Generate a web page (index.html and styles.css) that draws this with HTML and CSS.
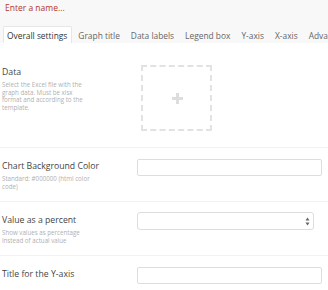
FILE: index.html
```html
<!DOCTYPE html>
<html>
    <head>
        <meta charset="utf-8">
        <title>Graph settings</title>
        <link rel="stylesheet" href="styles.css">
    </head>
    <body>
        <div class="top">
            <div class="name">Enter a name...</div>
            <ul class="tabs">
                <li class="active">Overall settings</li>
                <li>Graph title</li>
                <li>Data labels</li>
                <li>Legend box</li>
                <li>Y-axis</li>
                <li>X-axis</li>
                <li>Advanced</li>
            </ul>
        </div>
        <div class="form">
            <div class="row row-data">
                <div class="info">
                    <div class="label">Data</div>
                    <div class="desc">Select the Excel file with the graph data. Must be xlsx format and according to the template.</div>
                </div>
                <div class="control">
                    <div class="upload"><span class="plus"></span></div>
                </div>
            </div>
            <div class="row">
                <div class="info">
                    <div class="label">Chart Background Color</div>
                    <div class="desc">Standard: #000000 (html color code)</div>
                </div>
                <div class="control">
                    <input class="field" type="text">
                </div>
            </div>
            <div class="row">
                <div class="info">
                    <div class="label">Value as a percent</div>
                    <div class="desc">Show values as percentage instead of actual value</div>
                </div>
                <div class="control">
                    <div class="select">
                        <svg width="5" height="9" viewBox="0 0 5 9"><path d="M2.5 0.5 L4.5 3.5 H0.5 Z M2.5 8.5 L4.5 5.5 H0.5 Z" fill="#666"/></svg>
                    </div>
                </div>
            </div>
            <div class="row">
                <div class="info">
                    <div class="label">Title for the Y-axis</div>
                </div>
                <div class="control">
                    <input class="field" type="text">
                </div>
            </div>
        </div>
    </body>
</html>
```

FILE: styles.css
```css
*{
    margin:0px;
    padding:0px;
    box-sizing:border-box;
}
body{
    font-family:"Open Sans", "Liberation Sans", sans-serif;
    background:#fff;
    width:328px;
    overflow:hidden;
}
.top{
    background:#f8f8f8;
    height:43px;
}
.name{
    color:#b5362b;
    font-size:8.5px;
    line-height:14px;
    padding:1px 0 0 5px;
}
.tabs{
    list-style:none;
    display:flex;
    margin-top:11px;
    padding-left:3px;
    white-space:nowrap;
    overflow:hidden;
}
.tabs li{
    font-size:8.4px;
    color:#666;
    height:17px;
    line-height:17px;
    padding:0 4px 0 3px;
    margin-right:2px;
    border:1px solid transparent;
    border-bottom:none;
    border-radius:2px 2px 0 0;
}
.tabs li.active{
    background:#fff;
    border-color:#e6e6e6;
    color:#333;
}
.row{
    display:flex;
    height:54px;
    padding:11px 6px 0 2px;
    border-bottom:1px solid #f2f2f2;
}
.row-data{
    height:105px;
    padding-top:22px;
}
.info{
    width:135px;
    padding-top:1px;
}
.label{
    font-size:8.7px;
    color:#444;
    line-height:12px;
}
.desc{
    width:90px;
    font-size:6.2px;
    color:#b0b0b0;
    line-height:7.7px;
    margin-top:3px;
}
.control{
    flex:1;
}
.upload{
    width:71px;
    height:66px;
    margin:0 0 0 4px;
    border:2px dashed #e2e2e2;
    position:relative;
}
.plus{
    position:absolute;
    left:29px;
    top:26px;
    width:11px;
    height:11px;
    background:linear-gradient(#ddd,#ddd) center/11px 3px no-repeat, linear-gradient(#ddd,#ddd) center/3px 11px no-repeat;
}
.field{
    display:block;
    width:185px;
    height:17px;
    border:1px solid #ddd;
    border-radius:2px;
    background:#fff;
    outline:none;
}
.select{
    width:177px;
    height:18px;
    margin-top:-1px;
    border:1px solid #ddd;
    border-radius:3px;
    display:flex;
    align-items:center;
    justify-content:flex-end;
    padding-right:3px;
}
```
